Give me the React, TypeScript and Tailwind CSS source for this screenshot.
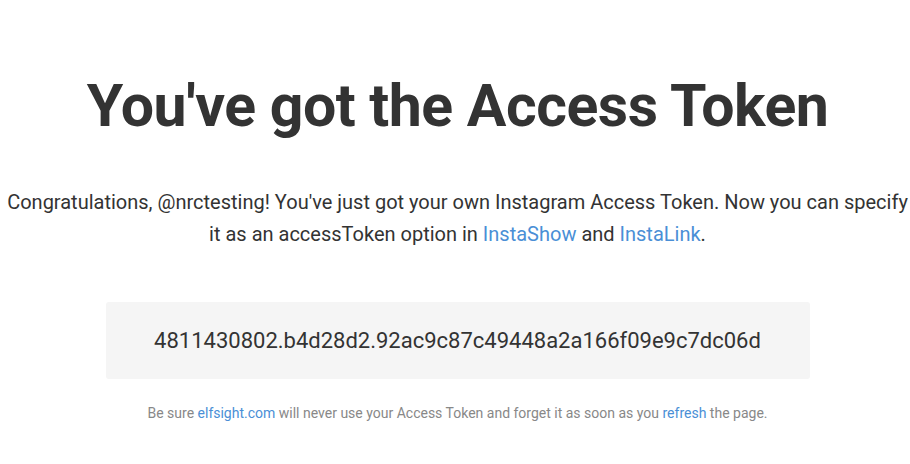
import React from 'react';

export default function App() {
  return (
    <div className="min-h-screen bg-white font-['Roboto',sans-serif] text-[#333]">
      <div className="flex flex-col items-center pl-[9px] pr-1 pt-[66px] text-center">
        <h1 className="text-[59px] font-bold leading-[80px] tracking-[-0.5px] text-[#333]">
          You've got the Access Token
        </h1>

        <p className="mt-[40px] whitespace-nowrap text-[20px] font-normal leading-[32px] text-[#333]">
          Congratulations, @nrctesting! You've just got your own Instagram Access Token. Now you can specify
          <br />
          it as an accessToken option in{' '}
          <a href="#" className="text-[#4a8fd6]">InstaShow</a> and{' '}
          <a href="#" className="text-[#4a8fd6]">InstaLink</a>.
        </p>

        <div className="mt-[52px] flex h-[77px] w-[704px] items-center justify-center rounded-[3px] bg-[#f5f5f5]">
          <span className="text-[22px] font-normal text-[#333]">
            4811430802.b4d28d2.92ac9c87c49448a2a166f09e9c7dc06d
          </span>
        </div>

        <p className="mt-[24px] text-[14px] font-normal text-[#888]">
          Be sure <a href="#" className="text-[#4a8fd6]">elfsight.com</a> will never use your Access Token and forget it as soon as you{' '}
          <a href="#" className="text-[#4a8fd6]">refresh</a> the page.
        </p>
      </div>
    </div>
  );
}
